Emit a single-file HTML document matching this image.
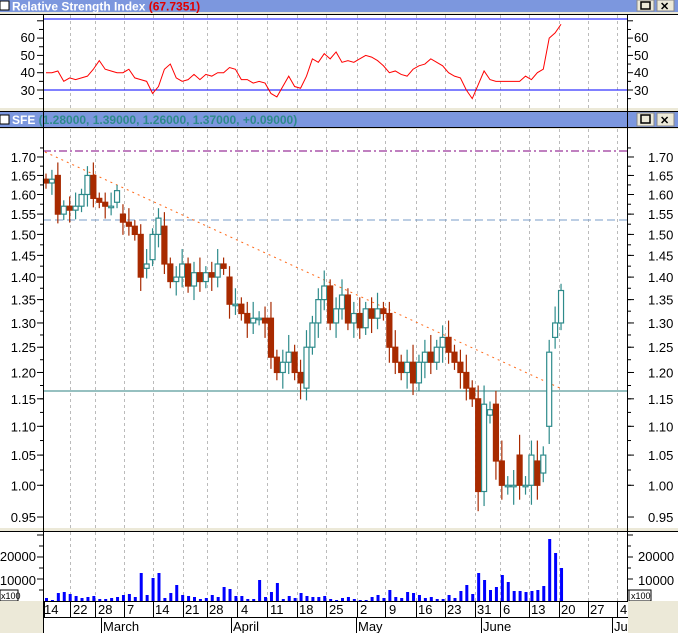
<!DOCTYPE html>
<html><head><meta charset="utf-8">
<style>
body{margin:0;width:678px;height:633px;overflow:hidden;background:#fff;font-family:"Liberation Sans",sans-serif;}
svg{display:block}
</style></head><body>
<svg id="s" width="678" height="633" xmlns="http://www.w3.org/2000/svg" font-family="Liberation Sans, sans-serif">
<rect x="0" y="0" width="678" height="633" fill="#fff"/>
<rect x="0" y="0" width="678" height="12" fill="#7c97de"/>
<rect x="0" y="12" width="678" height="2" fill="#ece9d8"/>
<rect x="0" y="14" width="678" height="1" fill="#000"/>
<rect x="0" y="1" width="9" height="9" fill="#fff" stroke="#000"/>
<text x="12" y="10.5" font-size="12" font-weight="bold" fill="#fff">Relative Strength Index <tspan fill="#e00000">(67.7351)</tspan></text>
<rect x="637" y="0" width="17" height="11" fill="#ece9d8" stroke="#888"/><rect x="641" y="2" width="9" height="7" fill="none" stroke="#000" stroke-width="1.5"/>
<rect x="657" y="0" width="17" height="11" fill="#ece9d8" stroke="#888"/><text x="660" y="10" font-size="11" font-weight="bold">✕</text>

<rect x="0" y="108" width="678" height="3" fill="#ece9d8"/>
<rect x="0" y="111" width="678" height="1" fill="#000"/>
<rect x="0" y="112" width="678" height="15" fill="#7c97de"/>
<rect x="0" y="127" width="678" height="1" fill="#000"/>
<rect x="0" y="128" width="678" height="1" fill="#ece9d8"/>
<rect x="0" y="115" width="9" height="9" fill="#fff" stroke="#000"/>
<text x="12" y="124" font-size="12" font-weight="bold" fill="#fff">SFE <tspan fill="#2e8b8b">(1.28000, 1.39000, 1.26000, 1.37000, +0.09000)</tspan></text>
<rect x="637" y="113" width="17" height="13" fill="#ece9d8" stroke="#888"/><rect x="641" y="115" width="9" height="8" fill="none" stroke="#000" stroke-width="1.5"/>
<rect x="657" y="113" width="17" height="13" fill="#ece9d8" stroke="#888"/><text x="660" y="124" font-size="11" font-weight="bold">✕</text>

<rect x="0" y="528" width="678" height="3" fill="#ece9d8"/>
<rect x="0" y="531" width="678" height="1" fill="#000"/>

<g id="grid" stroke="#bbb" stroke-dasharray="3,3"></g>
<line x1="43" y1="19" x2="627" y2="19" stroke="#00f"/>
<line x1="43" y1="90" x2="627" y2="90" stroke="#00f"/>
<polyline id="rsi" fill="none" stroke="#f00" stroke-width="1"/>
<line x1="43" y1="151" x2="627" y2="151" stroke="#800080" stroke-dasharray="8,3,2,3"/>
<line x1="43" y1="220" x2="627" y2="220" stroke="#7a9cc8" stroke-dasharray="8,4"/>
<line x1="43" y1="391" x2="627" y2="391" stroke="#2e8080"/>
<line x1="45" y1="152" x2="562" y2="389" stroke="#ff6a1a" stroke-dasharray="2,4"/>
<g id="candles"></g>
<g id="vol" fill="#00f"></g>

<line x1="43.5" y1="15" x2="43.5" y2="633" stroke="#000"/>
<line x1="627.5" y1="15" x2="627.5" y2="601" stroke="#000"/>
<g id="ticks" stroke="#000"></g>
<g font-size="13" fill="#000">
<text x="35" y="42" text-anchor="end">60</text><text x="35" y="60" text-anchor="end">50</text><text x="35" y="77" text-anchor="end">40</text><text x="35" y="95" text-anchor="end">30</text>
<text x="634" y="42">60</text><text x="634" y="60">50</text><text x="634" y="77">40</text><text x="634" y="95">30</text>
</g>
<g id="plab" font-size="13" fill="#000"></g>
<g font-size="13" fill="#000">
<text x="36" y="561" text-anchor="end">20000</text><text x="36" y="585" text-anchor="end">10000</text>
<text x="638" y="561">20000</text><text x="638" y="585">10000</text>
</g>
<rect x="0" y="590" width="18" height="11" fill="#fff" stroke="#000"/><text x="1" y="599" font-size="9">x100</text>
<rect x="629" y="590" width="22" height="11" fill="#fff" stroke="#000"/><text x="631" y="599" font-size="9">x100</text>
<rect x="0" y="601" width="43" height="32" fill="#ece9d8"/>
<rect x="628" y="601" width="50" height="32" fill="#ece9d8"/>
<line x1="43" y1="601.5" x2="628" y2="601.5" stroke="#000"/>
<line x1="43" y1="617.5" x2="628" y2="617.5" stroke="#000"/>
<g id="dates" font-size="12" fill="#000"></g>
<g font-size="13" fill="#000">
<line x1="101.5" y1="617" x2="101.5" y2="633" stroke="#000"/><text x="103" y="631">March</text>
<line x1="231.5" y1="617" x2="231.5" y2="633" stroke="#000"/><text x="233" y="631">April</text>
<line x1="356.5" y1="617" x2="356.5" y2="633" stroke="#000"/><text x="358" y="631">May</text>
<line x1="481.5" y1="617" x2="481.5" y2="633" stroke="#000"/><text x="483" y="631">June</text>
<line x1="612.5" y1="617" x2="612.5" y2="633" stroke="#000"/><text x="614" y="631">Ju</text>
<text x="44" y="614">14</text><text x="73" y="614">22</text><text x="98" y="614">28</text><text x="127" y="614">7</text><text x="155" y="614">14</text><text x="185" y="614">21</text><text x="209" y="614">28</text><text x="241" y="614">4</text><text x="270" y="614">11</text><text x="299" y="614">18</text><text x="329" y="614">25</text><text x="360" y="614">2</text><text x="389" y="614">9</text><text x="418" y="614">16</text><text x="447" y="614">23</text><text x="477" y="614">31</text><text x="503" y="614">6</text><text x="531" y="614">13</text><text x="561" y="614">20</text><text x="590" y="614">27</text><text x="620" y="614">4</text>
</g>
</svg>
<script>
var NS="http://www.w3.org/2000/svg";
function el(p,t,a){var e=document.createElementNS(NS,t);for(var k in a)e.setAttribute(k,a[k]);document.getElementById(p).appendChild(e);return e;}
var gx=[70,95,124,153,183,207,237,267,297,326,357,385,416,445,475,500,529,559,588,617];
gx.forEach(function(x){el("grid","line",{x1:x+.5,y1:15,x2:x+.5,y2:108});el("grid","line",{x1:x+.5,y1:129,x2:x+.5,y2:528});el("grid","line",{x1:x+.5,y1:532,x2:x+.5,y2:601});});
var dt=[44,70,95,124,153,183,207,237,267,297,326,357,385,416,445,475,500,529,559,588,617];
dt.forEach(function(x){el("ticks","line",{x1:x+.5,y1:601,x2:x+.5,y2:617});});
function Y(p){return 157+(0.5306-Math.log(p))*618.7;}
for(var i=0;i<16;i++){var p=1.70-i*0.05;var y=Y(p);var t=el("plab","text",{x:36,y:y+5,"text-anchor":"end"});t.textContent=p.toFixed(2);var t2=el("plab","text",{x:648,y:y+5});t2.textContent=p.toFixed(2);
 el("ticks","line",{x1:37,y1:y,x2:43,y2:y});el("ticks","line",{x1:627,y1:y,x2:634,y2:y});}
for(var i=0;i<30;i++){var p=1.725-i*0.025;var y=Y(p);el("ticks","line",{x1:40,y1:y,x2:43,y2:y});el("ticks","line",{x1:627,y1:y,x2:631,y2:y});}
for(var v=25;v<=70;v+=5){var y=90-(v-30)*1.73;var l=(v%10==0)?6:4;el("ticks","line",{x1:43-l,y1:y,x2:43,y2:y});el("ticks","line",{x1:627,y1:y,x2:627+l,y2:y});}
for(var v=5000;v<=30000;v+=5000){var y=601-v*0.0022;var l=(v%10000==0)?6:4;el("ticks","line",{x1:43-l,y1:y,x2:43,y2:y});el("ticks","line",{x1:627,y1:y,x2:627+l,y2:y});}
var C=[1.63,1.64,1.55,1.57,1.56,1.57,1.60,1.65,1.59,1.58,1.57,1.57,1.61,1.53,1.52,1.50,1.40,1.43,1.50,1.54,1.43,1.39,1.40,1.43,1.38,1.41,1.39,1.41,1.40,1.43,1.42,1.34,1.34,1.32,1.30,1.31,1.31,1.30,1.23,1.20,1.22,1.24,1.20,1.18,1.25,1.30,1.35,1.38,1.30,1.33,1.36,1.30,1.32,1.29,1.33,1.31,1.33,1.32,1.25,1.22,1.20,1.22,1.18,1.22,1.24,1.22,1.25,1.27,1.24,1.22,1.20,1.17,1.15,0.99,1.14,1.13,1.04,1.00,1.00,1.00,1.00,1.00,1.05,1.00,1.05,1.24,1.30,1.37];
var O={0:1.64,2:1.65,12:1.58,13:1.55,16:1.50,17:1.42,18:1.44,19:1.50,20:1.52,31:1.40,38:1.31,44:1.17,46:1.30,73:1.15,74:0.99,75:1.12,76:1.14,80:1.05,83:1.04,84:1.02,85:1.10,86:1.27,87:1.30};
var rsi=[40,40,41,35,37,36,37,38,42,47,42,41,40,40,42,37,36,35,28,32,42,45,37,35,36,39,36,39,38,40,40,43,42,36,36,34,35,34,28,26,32,38,32,31,38,48,46,51,48,52,46,47,46,48,50,49,47,44,40,41,39,38,42,44,45,48,46,44,40,38,37,30,25,33,41,36,35,35,35,35,35,38,36,40,42,60,63,68];
var vol=[3,1,8,9,7,5,3,4,5,2,2,3,4,6,7,4,28,6,23,28,3,8,16,6,5,4,2,3,6,4,14,12,5,5,2,2,21,4,9,18,2,5,3,8,5,4,4,5,2,1,3,4,2,1,1,4,6,3,11,4,3,9,8,6,3,4,2,2,6,3,10,16,7,28,21,11,14,26,19,10,10,9,10,11,15,62,48,33];
var pts=[];
for(var i=0;i<C.length;i++){
 var x=46+i*5.92;var c=C[i];var o=(O[i]!==undefined)?O[i]:(i?C[i-1]:c);
 var hi=Math.max(o,c)+0.015+((i*7)%3)*0.01, lo=Math.min(o,c)-0.015-((i*5)%3)*0.008;
 var up=c>=o;var col=up?"#2e8b8b":"#a82a00";
 el("candles","line",{x1:x,y1:Y(hi),x2:x,y2:Y(lo),stroke:col,"stroke-width":1.2});
 var yt=Y(Math.max(o,c)),yb=Y(Math.min(o,c));if(yb-yt<1.5){yb=yt+1.5;}
 el("candles","rect",{x:x-2.5,y:yt,width:5,height:yb-yt,fill:up?"#fff":col,stroke:col,"stroke-width":1.2});
 var r=rsi[i]||35;pts.push(x+","+(90-(r-30)*1.73));
 var h=vol[i]||3;el("vol","rect",{x:x-1,y:601-h,width:3,height:h});
}
document.getElementById("rsi").setAttribute("points",pts.join(" "));
</script>
</body></html>
